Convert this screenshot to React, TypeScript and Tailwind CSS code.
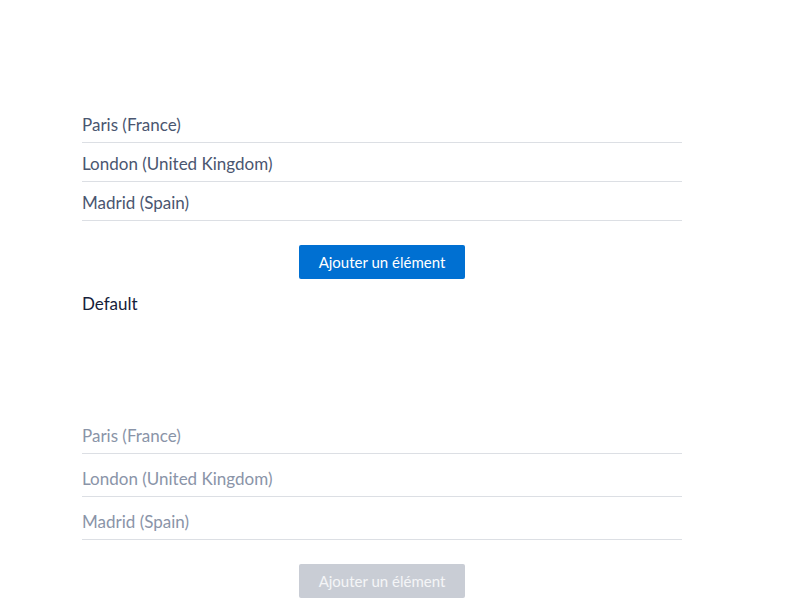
import React from "react";

const cities = ["Paris (France)", "London (United Kingdom)", "Madrid (Spain)"];

export default function App() {
  return (
    <div className="w-[800px] h-[600px] bg-white overflow-hidden" style={{ fontFamily: "Lato, 'Open Sans', sans-serif" }}>
      <div className="pl-[82px] w-[682px] pt-[104px]">
        <ul>
          {cities.map((c) => (
            <li key={c} className="h-[39px] pt-[10px] border-b border-[#dcdfe4] text-[17px] leading-[22px] text-[#4a5670]">
              {c}
            </li>
          ))}
        </ul>
        <div className="flex justify-center mt-[24px]">
          <button className="w-[166px] h-[34px] rounded-[2px] bg-[#0070d2] text-white text-[15px]">
            Ajouter un élément
          </button>
        </div>
        <div className="mt-[14px] text-[17px] leading-[22px] text-[#16213a]">Default</div>
        <ul className="mt-[96px]">
          {cities.map((c) => (
            <li key={c} className="h-[43px] pt-[14px] border-b border-[#dcdfe4] text-[17px] leading-[22px] text-[#8a94a8]">
              {c}
            </li>
          ))}
        </ul>
        <div className="flex justify-center mt-[24px]">
          <button className="w-[166px] h-[34px] rounded-[2px] bg-[#c9cdd5] text-white/80 text-[15px]">
            Ajouter un élément
          </button>
        </div>
      </div>
    </div>
  );
}
